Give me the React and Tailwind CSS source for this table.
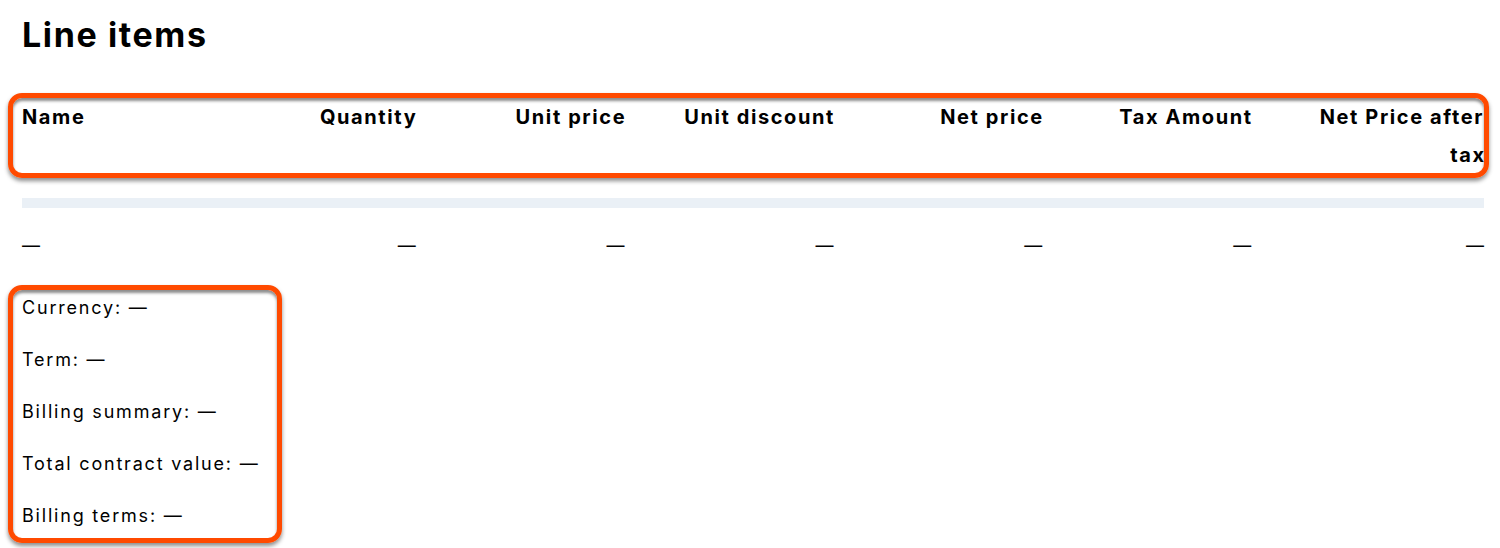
import React from 'react';

const columns = ['Name', 'Quantity', 'Unit price', 'Unit discount', 'Net price', 'Tax Amount', 'Net Price after tax'];

const summary = ['Currency:', 'Term:', 'Billing summary:', 'Total contract value:', 'Billing terms:'];

const cellClass = (i) =>
  i === 0 ? 'pr-6 text-left' : i === columns.length - 1 ? 'pl-[14px] text-right' : 'pr-6 text-right';

// orange annotation frame drawn over the content
const Highlight = ({ className }) => (
  <div
    className={`pointer-events-none absolute rounded-[14px] border-[5px] border-[#ff4a00] shadow-[0_3px_4px_rgba(0,0,0,0.45),inset_0_3px_3px_rgba(0,0,0,0.45)] ${className}`}
  />
);

const App = () => {
  return (
    <div className="min-h-[548px] w-[1500px] bg-white text-black" style={{ fontFamily: 'Inter, "Noto Sans", sans-serif' }}>
      <div className="px-[22px] pt-[14px] w-[1506px]">
        <h1 className="text-[34px] font-bold leading-[41px] tracking-[1.6px]">Line items</h1>

        {/* Header row */}
        <div className="relative mt-[43px] w-[1462px]">
          <Highlight className="-left-[14px] -right-[5px] -top-[5px] -bottom-[4px]" />
          <div className="grid min-h-[76px] grid-cols-7 text-[20px] font-bold leading-[38px] tracking-[1.6px]">
            {columns.map((col, i) => (
              <div key={col} className={cellClass(i)}>
                <span className="-mr-[1.6px]">{col}</span>
              </div>
            ))}
          </div>
        </div>

        <div className="mt-6 h-[10px] w-[1462px] bg-[#eaf0f6]" />

        {/* Empty line item row */}
        <div className="mt-6 grid w-[1462px] grid-cols-7 text-[18px] leading-[27px]">
          {columns.map((col, i) => (
            <div key={col} className={i === 0 ? 'pr-6 text-left' : i === columns.length - 1 ? 'text-right' : 'pr-6 text-right'}>
              —
            </div>
          ))}
        </div>

        {/* Totals */}
        <div className="relative mt-[35px] w-[250px]">
          <Highlight className="-left-[14px] -right-[10px] -top-[9px] -bottom-[14px]" />
          <div className="flex flex-col gap-[25px] text-[18px] leading-[27px] tracking-[1.8px]">
            {summary.map((label) => (
              <p key={label}>
                {label} <span className="tracking-normal">—</span>
              </p>
            ))}
          </div>
        </div>
      </div>
    </div>
  );
};

export default App;
